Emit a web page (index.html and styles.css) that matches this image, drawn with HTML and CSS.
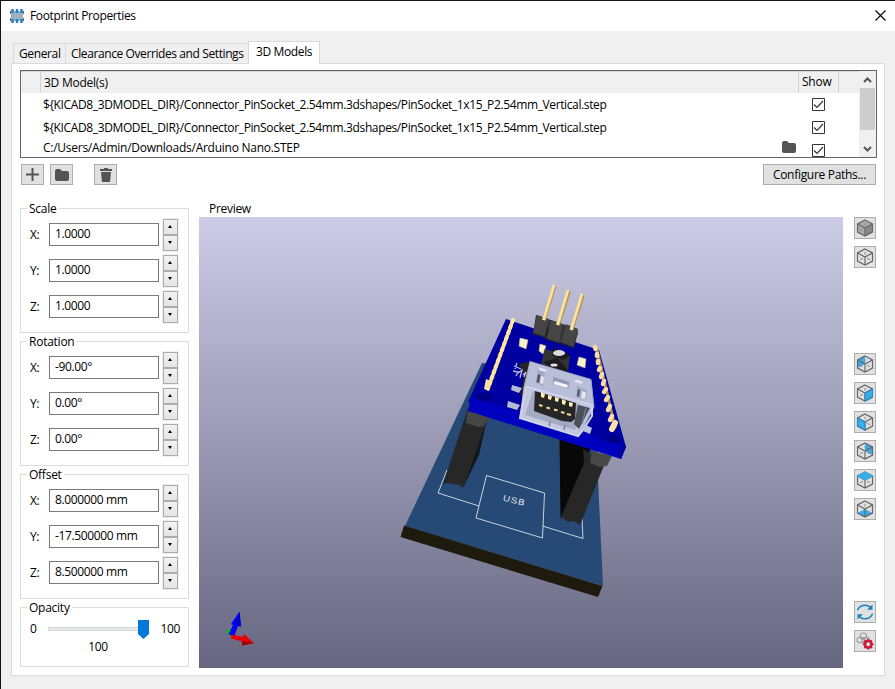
FILE: index.html
```html
<!DOCTYPE html>
<html lang="en">
<head>
<meta charset="utf-8">
<title>Footprint Properties</title>
<link rel="stylesheet" href="styles.css">
</head>
<body>
<svg width="0" height="0" class="defs">
  <defs>
    <symbol id="folder" viewBox="0 0 14 12"><path d="M0 2Q0 0 2 0H5L7 2H12Q14 2 14 4V10Q14 12 12 12H2Q0 12 0 10Z" fill="#545454"/></symbol>
    <symbol id="checked" viewBox="0 0 13 13"><path d="M.5.5H12.5V12.5H.5Z" fill="#fff" stroke="#333"/><path d="M2 6.5 5 9.5 11 3" fill="none" stroke="#333" stroke-width="1.2"/></symbol>
    <symbol id="cube" viewBox="0 0 18 18"><path d="M9 1.5 16 5.2V12.8L9 16.5 2 12.8V5.2ZM2 5.2 9 9 16 5.2M9 9V16.5" fill="none" stroke="#666" stroke-width="1.1"/></symbol>
    <symbol id="back" viewBox="0 0 18 18"><path d="M9 4V7M4.5 11.5 7 10.2M11 10.2 13.5 11.5" fill="none" stroke="#929292"/></symbol>
  </defs>
</svg>
<div class="window">
  <header class="titlebar">
    <svg class="appicon" viewBox="0 0 14 14"><path d="M0 2H14V5H13V9H14V12H0V9H1V5H0Z" fill="#9fb0bf"/><path d="M.5 2V5M13.500 2V5M.5 9V12M13.500 9V12" stroke="#666"/><path d="M2.500 0V4M7 0V4M11.500 0V4M2.500 10V14M7 10V14M11.500 10V14" stroke="#1a81c4" stroke-width="2.400"/></svg>
    <h1>Footprint Properties</h1>
    <svg class="close" viewBox="0 0 11 11"><path d="M.5.5 10.5 10.5M10.5.5.5 10.5" stroke="#000" stroke-width="1.1"/></svg>
  </header>
  <nav class="tabs">
    <span class="tab general">General</span><span class="tab clearance">Clearance Overrides and Settings</span><span class="tab active">3D Models</span>
  </nav>
  <main class="panel">
    <section class="models">
      <div class="table">
        <div class="row head"><span class="gutter"></span><span class="path">3D Model(s)</span><span class="show">Show</span><span class="rest"></span></div>
        <div class="row"><span class="path wide">${KICAD8_3DMODEL_DIR}/Connector_PinSocket_2.54mm.3dshapes/PinSocket_1x15_P2.54mm_Vertical.step</span><svg class="check"><use href="#checked"/></svg></div>
        <div class="row"><span class="path wide">${KICAD8_3DMODEL_DIR}/Connector_PinSocket_2.54mm.3dshapes/PinSocket_1x15_P2.54mm_Vertical.step</span><svg class="check"><use href="#checked"/></svg></div>
        <div class="row last"><span class="path file">C:/Users/Admin/Downloads/Arduino Nano.STEP</span><svg class="browse"><use href="#folder"/></svg><svg class="check"><use href="#checked"/></svg></div>
      </div>
      <div class="scroll">
        <svg viewBox="0 0 9 6"><path d="M1 5 4.5 1.5 8 5" fill="none" stroke="#555" stroke-width="2"/></svg>
        <i></i>
        <svg class="down" viewBox="0 0 9 6"><path d="M1 1 4.5 4.5 8 1" fill="none" stroke="#555" stroke-width="2"/></svg>
      </div>
    </section>
    <div class="actions">
      <button class="btn"><svg width="13" height="13"><path d="M6.500 0V13M0 6.500H13" stroke="#545454" stroke-width="2"/></svg></button>
      <button class="btn"><svg width="14" height="12"><use href="#folder"/></svg></button>
      <button class="btn trash"><svg width="12" height="14"><path d="M0 1H4V0H8V1H12V3H0ZM1 4H11L10 14H2Z" fill="#545454"/></svg></button>
      <button class="btn configure">Configure Paths...</button>
    </div>
    <div class="work">
      <aside class="side">
        <fieldset><legend>Scale</legend>
          <div class="field"><label>X:</label><span class="input">1.0000</span><span class="spin"><b></b><b></b></span></div>
          <div class="field"><label>Y:</label><span class="input">1.0000</span><span class="spin"><b></b><b></b></span></div>
          <div class="field"><label>Z:</label><span class="input">1.0000</span><span class="spin"><b></b><b></b></span></div>
        </fieldset>
        <fieldset><legend>Rotation</legend>
          <div class="field"><label>X:</label><span class="input">-90.00°</span><span class="spin"><b></b><b></b></span></div>
          <div class="field"><label>Y:</label><span class="input">0.00°</span><span class="spin"><b></b><b></b></span></div>
          <div class="field"><label>Z:</label><span class="input">0.00°</span><span class="spin"><b></b><b></b></span></div>
        </fieldset>
        <fieldset><legend>Offset</legend>
          <div class="field"><label>X:</label><span class="input">8.000000 mm</span><span class="spin"><b></b><b></b></span></div>
          <div class="field"><label>Y:</label><span class="input">-17.500000 mm</span><span class="spin"><b></b><b></b></span></div>
          <div class="field"><label>Z:</label><span class="input">8.500000 mm</span><span class="spin"><b></b><b></b></span></div>
        </fieldset>
        <fieldset class="opacity"><legend>Opacity</legend>
          <div class="slider"><span class="min">0</span><svg class="track" viewBox="0 0 102 20"><path d="M.5 8.500H95V11.500H.5Z" fill="#e7eaea" stroke="#d6d6d6"/><path d="M90 1H101V15L95.500 20 90 15Z" fill="#0078d7"/></svg><span>100</span></div>
          <div class="value">100</div>
        </fieldset>
      </aside>
      <section class="preview">
        <h2>Preview</h2>
        <svg class="scene" viewBox="199 217 644 451">
          <path d="M482 363 593 371 603 586 405 526Z" fill="#264a75"/>
          <path d="M404 525.500 602.500 586 598 597 400.500 537Z" fill="#1e1a0e"/>
          <g fill="none" stroke="#c9d3dc"><path d="M447 470 438 493 479 506M542.500 526 583 538.500 582 519M486.500 475.500 544.500 493 542.500 538 476 518Z"/></g>
          <text class="silk" transform="translate(502.500 500.500) rotate(14) scale(1.150 1)">USB</text>
          <path d="M468 408 490 410 463 488 459 485 447 483 443 484Z" fill="#272727"/>
          <path d="M468 410 490 414 485 426 478 427 466 423Z" fill="#464646"/>
          <path d="M487 419 479 455 463 488Z" fill="#161616"/>
          <path d="M559.500 438 591 446 582 481 560.500 518Z" fill="#080808"/>
          <path d="M583 449 605 463 580 525 574 521 568 522 563 518 560 519 584 463Z" fill="#272727"/>
          <path d="M592 451 612 456 607 466 600 467 590 463Z" fill="#484848"/>
          <path d="M506 319 599 350 626 447 468 402Z" fill="#0000a2"/>
          <path d="M471 397 626 447 621 459 468 411Z" fill="#0000bf"/>
          <path d="M621 438 626 447 621 459 618 457Z" fill="#0000a8"/>
          <ellipse cx="484" cy="397" rx="8" ry="4" fill="#000084"/><ellipse cx="613" cy="439" rx="8" ry="4" fill="#000084"/>
          <path d="M536 315 577 329 578 333 574 347 533 334Z" fill="#333"/>
          <path d="M537 315 549 319 545 337 533 333ZM551 320 563 324 559 343 547 339ZM566 324 578 329 573 347 561 342Z" fill="#454545"/>
          <path d="M532 333 545 337 548 327 546 339 574 348" fill="none" stroke="#202020"/>
          <g fill="none" stroke="#b5965a" stroke-width="4"><path d="M554.500 286 544 320M569 291 558 325M583 295 571.500 330"/></g>
          <g fill="none" stroke="#fae3a0" stroke-width="2.800"><path d="M554 285 543.500 320M568 290 557.500 325M582 294 571 330"/></g>
          <g fill="none" stroke-linecap="round"><path d="M513 320 488 389" stroke="#d2b777" stroke-width="3.400"/><path d="M513 320 488 388" stroke="#ffe6a0" stroke-width="4" stroke-dasharray="2.500 3.500"/></g>
          <path d="M486 379 491 381 489 391 484 389Z" fill="#fbdfa0"/>
          <g fill="none" stroke-linecap="round"><path d="M597 350 615 427" stroke="#a68955" stroke-width="3"/><path d="M595 347 595.500 349M597 354 597 356M598 361 598 363M600 368 599 370M602 374 601 377M604 381 603 384M606 389 604 392M608 397 606 400M610 406 608 410M612 416 610 420" stroke="#f9dda0" stroke-width="4.500"/><path d="M615 423 612 429" stroke="#fce4a4" stroke-width="6"/></g>
          <g stroke="#bdb989" stroke-width=".6" fill="#faf4cd"><path d="M520 338 528 340 526 349 519 346ZM540 344 546 346 543 354 539 351ZM579 357 586 359 585 368 577 365Z"/></g>
          <path d="M545 349 570 356 568 371 541 364Z" fill="#333"/><path d="M554 348 565 352 570 356 563 360 552 355Z" fill="#1c1c1c"/><ellipse cx="559" cy="353" rx="6" ry="3" fill="#ddd"/>
          <path d="M543 362 557 358 568 370 560 374Z" fill="#1c1c1c"/><ellipse cx="554" cy="365" rx="3.500" ry="1.500" fill="#e5e5e5"/>
          <path d="M519 364 532 361 528 392 520 396 524 375Z" fill="#242424"/>
          <g fill="none" stroke="#b9bdd9" stroke-width="1.300"><path d="M514 366 521 369M517 363 515 369M513 371 518 372 516 376M518 373 522 370 520 378M523 375 526 372 524 377"/></g>
          <path d="M512 385 522 388 519 393 511 390ZM508 401 520 405 517 410 507 407Z" fill="#b4bad2"/>
          <path d="M530 361.500 591 379.500 594 407 579 436 520 418 524 387Z" fill="#b9bfd9" stroke="#a3a9c3"/>
          <path d="M538 369 545 371.500 543 386 536 383ZM577 386 587 390 586 400 576 397Z" fill="#a3a9c5"/>
          <path d="M538 374 540.500 375 539 383 536.500 382ZM578 389 580 390 579 397 577 396Z" fill="#4e5268"/>
          <path d="M541 376 544 377 543 384 540 383ZM582 391 586 392.500 585 399 581 398Z" fill="#e3e6f2"/>
          <path d="M553.500 377 569.500 382 568 389 553 384Z" fill="#9298b2"/><path d="M555 381 568 385 567 388 553.500 384Z" fill="#f3f5fc"/>
          <path d="M540 367.500 547 370 545 372 538.500 370ZM576 379.500 583 382 581 384 574 381.500Z" fill="#e2e5f2"/>
          <path d="M526 387 592 406 577 436 520 418Z" fill="#c3c8e0"/>
          <path d="M533 391 587 407 575 430 525 415Z" fill="#a5aac3"/>
          <path d="M535 391 576 403 575 419 571 422 562 421 534 411Z" fill="#262626"/>
          <path d="M578 405 590 408 579 429 574 424Z" fill="#4b4e5b"/><path d="M586 408 582 424M550 421 549 428M565 425 564 430" stroke="#777a90" stroke-width="1.300"/>
          <g fill="#fff0b3"><path d="M541 392 545 394 544 398 541 397ZM548 395 552 396 551 400 548 399ZM555 397 559 398 558 402 555 401ZM562 399 566 401 565 405 562 404ZM569 402 573 403 572 407 569 406Z"/></g>
          <path d="M539 405 542.500 406M546.500 407.500 550 408.500M554 409.500 557.500 410.500M561 412 564.500 413M567 414 571 415" stroke="#f2d69a" stroke-width="2"/>
          <path d="M526 387 520 418 578 436 583 430M526 386.500 592 405 592 416 583 430" fill="none" stroke="#ced3e8" stroke-width="2"/>
          <path d="M584 424 592 428 590 434 583 431Z" fill="#bdc3de"/>
          <circle cx="230" cy="632" r="3" fill="#00c800"/>
          <path d="M228.500 634 233 625 231 624 239.500 611.500 241 626.500 238 626 234 637Z" fill="#00f"/><path d="M236 625 239.500 611.500 241 626.500Z" fill="#0000c0"/>
          <path d="M232 634.500 243 637 244 634 254 643 242 645.500 242 641.500 231 638.500Z" fill="#e80000"/><path d="M242 641 254 643 242 645.500Z" fill="#9c0000"/>
        </svg>
      </section>
      <div class="tools">
        <button class="btn"><svg class="ico"><path d="M9 1.500 16 5.200V12.800L9 16.500 2 12.800V5.200Z" fill="#aaa"/><path d="M9 9 16 5.200V12.800L9 16.500Z" fill="#888"/><use href="#back"/><use href="#cube"/></svg></button>
        <button class="btn"><svg class="ico"><use href="#back"/><use href="#cube"/></svg></button>
        <button class="btn views"><svg class="ico"><path d="M2 5.200 9 1.500V9L2 12.800Z" fill="#38aee8"/><use href="#back"/><use href="#cube"/></svg></button>
        <button class="btn"><svg class="ico"><use href="#back"/><use href="#cube"/><path d="M9 9 16 5.200V12.800L9 16.500Z" fill="#38aee8" stroke="#278abd"/></svg></button>
        <button class="btn"><svg class="ico"><use href="#back"/><use href="#cube"/><path d="M9 9 2 5.200V12.800L9 16.500Z" fill="#38aee8" stroke="#278abd"/></svg></button>
        <button class="btn"><svg class="ico"><path d="M9 1.500 16 5.200V12.800L9 9Z" fill="#38aee8"/><use href="#back"/><use href="#cube"/></svg></button>
        <button class="btn"><svg class="ico"><use href="#back"/><use href="#cube"/><path d="M9 1.500 16 5.200 9 9 2 5.200Z" fill="#38aee8" stroke="#38aee8"/></svg></button>
        <button class="btn"><svg class="ico"><path d="M9 9 16 12.800 9 16.500 2 12.800Z" fill="#38aee8"/><path d="M9 4V7" stroke="#929292"/><use href="#cube"/></svg></button>
        <button class="btn refresh"><svg class="ico"><path d="M2 7.500A7.200 6.500 0 0 1 14 4.500M16 10.500A7.200 6.500 0 0 1 4 13.500" fill="none" stroke="#1a81c4" stroke-width="1.400"/><path d="M16 2V7H11ZM2 16V11H7Z" fill="#1a81c4"/></svg></button>
        <button class="btn"><svg class="ico"><g fill="none" stroke="#9a9a9a"><ellipse cx="7.500" cy="4.500" rx="3" ry="3"/><ellipse cx="5" cy="8" rx="3.500" ry="2.500"/><ellipse cx="9.500" cy="8" rx="3.500" ry="2.500"/></g><circle cx="12" cy="12" r="3" fill="#ddd" stroke="#c8193c" stroke-width="2.400"/><path d="M12 7V9M12 15V17M7 12H9M15 12H17M8.500 8.500 10 10M14 14 15.500 15.500M8.500 15.500 10 14M14 10 15.500 8.500" stroke="#c8193c" stroke-width="2"/></svg></button>
      </div>
    </div>
  </main>
</div>
</body>
</html>
```
FILE: styles.css
```css
* { box-sizing: border-box; }
body { margin: 0; font: 12px/16px "Open Sans", "Noto Sans", sans-serif; letter-spacing: -.37px; color: #000; }
.defs { position: absolute; }
h1, h2 { margin: 0; font: inherit; }
svg { display: block; flex: none; }
.window { width: 895px; height: 689px; overflow: hidden; background: #f0f0f0; border-left: 1px solid #151515; border-top: 1px solid #151515; }
.titlebar { height: 30px; background: #fff; display: flex; align-items: center; padding: 0 9px 1px; }
.appicon { width: 14px; height: 14px; margin-right: 6px; }
.titlebar h1 { padding-top: 1px; }
.close { width: 11px; height: 11px; margin-left: auto; }
.tabs { height: 32px; padding-left: 12px; display: flex; align-items: flex-end; }
.tab { height: 20px; border: 1px solid #d9d9d9; border-bottom: 0; padding: 2px 0 0 6px; white-space: nowrap; }
.general { width: 52px; border-right: 0; padding-left: 5px; }
.clearance { width: 183px; border-right: 0; padding-left: 5px; letter-spacing: -.4px; }
.active { width: 72px; height: 23px; background: #fff; padding: 2px 0 0 7px; position: relative; margin-bottom: -1px; }
.panel { width: 874px; height: 613px; margin-left: 10px; background: #fff; border: 1px solid #dcdcdc; padding: 6px 7px 0 8px; }
.models { width: 857px; height: 88px; border: 1px solid #646464; display: flex; overflow: hidden; }
.table { width: 838px; }
.row { display: flex; height: 23px; align-items: center; padding-left: 22px; }
.head { height: 22px; background: #f0f0f0; padding: 0; border-top: 1px solid #d5d5d5; letter-spacing: -.25px; }
.gutter { width: 20px; height: 21px; border-right: 1px solid #d2d2d2; }
.head .path { width: 757px; padding-left: 3px; }
.show { width: 41px; height: 21px; padding: 2px 0 0 3px; border: solid #d2d2d2; border-width: 0 1px; }
.wide { width: 769px; letter-spacing: -.375px; }
.check { width: 13px; height: 13px; margin-bottom: 1px; }
.last { height: 21px; align-items: flex-start; }
.file { width: 739px; padding-top: 1px; letter-spacing: -.26px; }
.browse { width: 14px; height: 12px; margin: 2px 16px 0 0; }
.last .check { margin-top: 5px; }
.scroll { width: 17px; background: #f0f0f0; display: flex; flex-direction: column; align-items: center; padding-top: 6px; }
.scroll svg { width: 9px; height: 6px; }
.scroll i { width: 15px; height: 42px; margin-top: 5px; background: #cdcdcd; }
.scroll .down { margin-top: 16px; }
.actions { display: flex; gap: 6px; margin: 6px 1px 0; height: 21px; }
.btn { width: 23px; height: 21px; padding: 0; border: 1px solid #adadad; background: #e1e1e1; display: flex; align-items: center; justify-content: center; font: inherit; letter-spacing: inherit; color: #000; }
.trash { margin-left: 15px; }
.configure { width: 113px; margin-left: auto; letter-spacing: -.3px; }
.work { display: flex; margin-top: 16px; }
.side { width: 169px; display: flex; flex-direction: column; }
fieldset { height: 125px; min-width: 0; margin: 7px 0 1px; padding: 8px 8px 0; border: 1px solid #dcdcdc; position: relative; }
legend { position: absolute; top: -8px; left: 6px; background: #fff; padding: 0 2px; line-height: 15px; letter-spacing: -.25px; }
.field { display: flex; height: 36px; align-items: center; }
.field label { width: 20px; padding: 0 0 1px 1px; }
.input { width: 110px; height: 23px; border: 1px solid #7a7a7a; margin-bottom: 2px; padding: 1px 0 0 5px; line-height: 18px; }
.spin { width: 17px; height: 34px; margin-left: 3px; padding: 1px; background: #f0f0f0; }
.spin b { display: block; height: 16px; border: 1px solid #acacac; background: linear-gradient(#f2f2f2, #e5e5e5); position: relative; }
.spin b::after { content: ""; position: absolute; left: 4px; top: 5px; border: solid transparent; border-width: 0 2.5px 3px; border-bottom-color: #000; }
.spin b + b::after { border-width: 3px 2.5px 0; border-top-color: #000; }
.opacity { height: 60px; padding-top: 11px; }
.slider { display: flex; align-items: center; height: 20px; }
.min { width: 20px; padding-left: 1px; }
.track { width: 102px; height: 20px; margin-right: 11px; }
.value { text-align: center; padding-right: 13px; }
.preview { margin-left: 10px; width: 644px; }
.preview h2 { height: 16px; padding-left: 10px; line-height: 15px; letter-spacing: -.3px; }
.scene { width: 644px; height: 451px; background: linear-gradient(#cccce6, #666680); }
.silk { font: 8.5px "Liberation Sans", sans-serif; letter-spacing: .8px; fill: #e2e8ee; }
.tools { margin: 16px 0 0 11px; display: flex; flex-direction: column; gap: 7px; }
.tools .btn { width: 22px; height: 22px; }
.ico { width: 18px; height: 18px; transform: scale(1.07); }
.views { margin-top: 78px; }
.refresh { margin-top: 74px; }
```
